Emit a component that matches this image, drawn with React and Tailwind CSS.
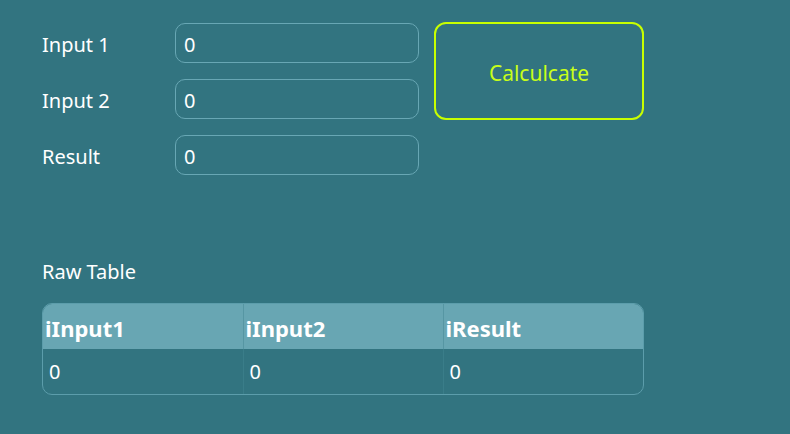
const rows = [{ a: 0, b: 0, r: 0 }];

function Field({ label, value }) {
  return (
    <div className="flex h-10 items-center">
      <span className="w-[133px] pt-[3px] text-[20px] text-white">{label}</span>
      <div className="flex h-10 w-[244px] items-center rounded-[10px] border-[1.5px] border-[#68a7b4] px-2 pt-[3px] text-[20px] text-white">
        {value}
      </div>
    </div>
  );
}

export default function App() {
  return (
    <div
      className="h-[434px] w-[790px] overflow-hidden bg-[#327480] pl-[42px] pt-[23px]"
      style={{ fontFamily: '"Noto Sans", "Segoe UI", sans-serif' }}
    >
      <div className="flex gap-[15px]">
        <div className="flex flex-col gap-4">
          <Field label="Input 1" value="0" />
          <Field label="Input 2" value="0" />
          <Field label="Result" value="0" />
        </div>
        <button
          type="button"
          className="mt-[-1px] flex h-[98px] w-[210px] items-center justify-center rounded-[12px] border-2 border-[#c8ff00] pt-[6px] text-[21px] text-[#c8ff1a]"
        >
          Calculcate
        </button>
      </div>

      <p className="mt-[82px] text-[20px] text-white">Raw Table</p>

      <div className="mt-[16px] w-[602px] overflow-hidden rounded-[10px] border border-[#5c9dab]">
        <table className="w-full table-fixed border-collapse text-left text-white">
          <thead className="bg-[#68a6b3]">
            <tr className="h-[45px]">
              <th className="border-r border-[#5696a3] px-[2px] pt-[3px] text-[22px] font-bold">iInput1</th>
              <th className="border-r border-[#5696a3] px-[2px] pt-[3px] text-[22px] font-bold">iInput2</th>
              <th className="px-[2px] pt-[3px] text-[22px] font-bold">iResult</th>
            </tr>
          </thead>
          <tbody className="text-[20px]">
            {rows.map((row, i) => (
              <tr key={i} className="h-[45px]">
                <td className="border-r border-[#3a7d89] px-[6px]">{row.a}</td>
                <td className="border-r border-[#3a7d89] px-[6px]">{row.b}</td>
                <td className="px-[6px]">{row.r}</td>
              </tr>
            ))}
          </tbody>
        </table>
      </div>
    </div>
  );
}
